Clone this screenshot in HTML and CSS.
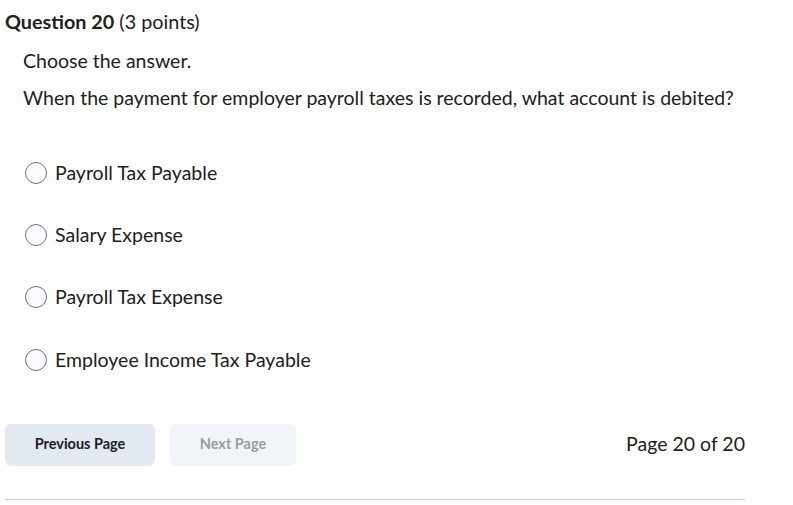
FILE: index.html
```html
<!DOCTYPE html>
<html>
<head>
<meta charset="utf-8">
<link rel="stylesheet" href="styles.css">
</head>
<body>
<div class="page">
  <h2 class="q-title"><strong>Question 20</strong> <span class="pts">(3 points)</span></h2>
  <div class="q-body">
    <p class="instr">Choose the answer.</p>
    <p class="stem">When the payment for employer payroll taxes is recorded, what account is debited?</p>
    <div class="options">
      <label class="opt"><span class="radio"></span><span>Payroll Tax Payable</span></label>
      <label class="opt"><span class="radio"></span><span>Salary Expense</span></label>
      <label class="opt"><span class="radio"></span><span>Payroll Tax Expense</span></label>
      <label class="opt"><span class="radio"></span><span>Employee Income Tax Payable</span></label>
    </div>
  </div>
  <div class="nav">
    <div class="btns">
      <button class="btn prev">Previous Page</button>
      <button class="btn next">Next Page</button>
    </div>
    <div class="count">Page 20 of 20</div>
  </div>
  <div class="rule"></div>
</div>
</body>
</html>
```
FILE: styles.css
```css
html, body { margin: 0; padding: 0; background: #fff; }
body { font-family: Lato, "Noto Sans", sans-serif; color: #202122; }
.page { width: 740px; padding: 0 0 0 5px; }
.q-title { margin: 0; padding-top: 9px; font-size: 19.8px; line-height: 24px; font-weight: 400; color: #202122; }
.q-title strong { font-weight: 700; }
.q-body { padding-left: 18px; }
.instr { margin: 0; padding-top: 15px; font-size: 19.5px; line-height: 26px; }
.stem { margin: 0; padding-top: 11px; font-size: 19.5px; line-height: 26px; }
.options { display: flex; flex-direction: column; gap: 36px; padding-top: 49px; }
.opt { display: flex; align-items: center; gap: 8px; font-size: 19.5px; line-height: 26px; padding-left: 2px; }
.opt:last-child { margin-top: 1px; }
.radio { width: 20px; height: 20px; border: 1px solid #6e7477; border-radius: 50%; background: #f9fbff; flex: none; }
.nav { display: flex; justify-content: space-between; align-items: center; margin-top: 51px; }
.btns { display: flex; gap: 15px; }
.btn { font-family: Lato, "Noto Sans", sans-serif; font-size: 14.5px; font-weight: 700; border: none; border-radius: 6px; height: 42px; padding: 0 0 4px; }
.prev { width: 150px; background: #e3e9f1; color: #202122; }
.next { width: 126px; background: #f1f4f8; color: #9a9c9e; }
.count { font-size: 19.5px; line-height: 26px; margin-top: -3px; }
.rule { height: 1px; background: #cdd5dc; margin-top: 33px; }
```
